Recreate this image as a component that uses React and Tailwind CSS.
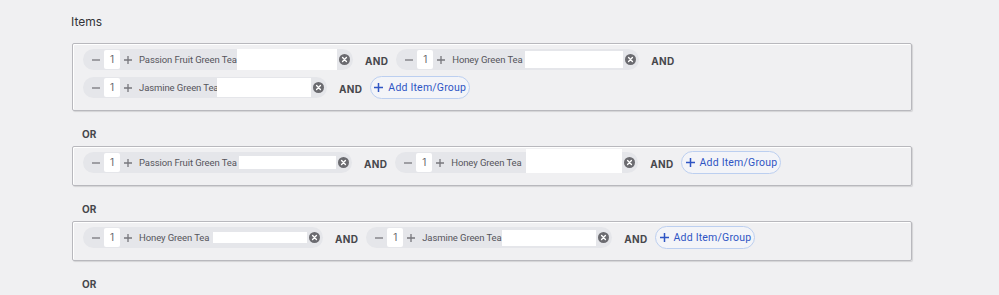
import React from 'react';

const groups = [
  {
    rows: [
      {
        items: [
          { name: 'Passion Fruit Green Tea', textW: 'w-[98px]', inputW: 'w-[100px]', inputH: 'h-[21px]' },
          { name: 'Honey Green Tea', textW: 'w-[73px]', inputW: 'w-[98px]', inputH: 'h-[17px]' },
        ],
        add: false,
      },
      {
        items: [{ name: 'Jasmine Green Tea', textW: 'w-[78px]', inputW: 'w-[94px]', inputH: 'h-[19px]' }],
        add: true,
      },
    ],
  },
  {
    rows: [
      {
        items: [
          { name: 'Passion Fruit Green Tea', textW: 'w-[100px]', inputW: 'w-[97px]', inputH: 'h-[13px]' },
          { name: 'Honey Green Tea', textW: 'w-[75px]', inputW: 'w-[96px]', inputH: 'h-[24px] -mt-[4px]' },
        ],
        add: true,
      },
    ],
  },
  {
    rows: [
      {
        items: [
          { name: 'Honey Green Tea', textW: 'w-[74px]', inputW: 'w-[94px]', inputH: 'h-[11px]' },
          { name: 'Jasmine Green Tea', textW: 'w-[80px]', inputW: 'w-[94px]', inputH: 'h-[16px]' },
        ],
        add: true,
      },
    ],
  },
];

const Minus = () => (
  <svg width="8" height="8" viewBox="0 0 8 8" className="shrink-0">
    <path d="M0 4h8" stroke="#77777c" strokeWidth="1.3" />
  </svg>
);

const Plus = () => (
  <svg width="8" height="8" viewBox="0 0 8 8" className="shrink-0">
    <path d="M0 4h8M4 0v8" stroke="#77777c" strokeWidth="1.3" />
  </svg>
);

const Clear = () => (
  <svg width="11" height="11" viewBox="0 0 12 12" className="shrink-0">
    <circle cx="6" cy="6" r="6" fill="#6b6b70" />
    <path d="M3.9 3.9l4.2 4.2M8.1 3.9l-4.2 4.2" stroke="#fff" strokeWidth="1.5" strokeLinecap="round" />
  </svg>
);

const ItemChip = ({ item }) => (
  <div className="flex items-center h-[21px] rounded-full bg-[#e5e6ea] pl-[9px] pr-[3px]">
    <Minus />
    <div className="ml-[4px] w-[16px] h-[19px] rounded-[2px] bg-white flex items-center justify-center text-[10px] text-[#66666b]">
      1
    </div>
    <span className="ml-[4px]">
      <Plus />
    </span>
    <span className={`ml-[7px] ${item.textW} overflow-hidden whitespace-nowrap font-['Roboto',sans-serif] text-[9.5px] tracking-[-0.1px] leading-[21px] text-[#55555b]`}>
      {item.name}
    </span>
    <div className={`${item.inputW} ${item.inputH} bg-white`} />
    <span className="ml-[2px] flex">
      <Clear />
    </span>
  </div>
);

const AndLabel = () => (
  <span className="ml-[12px] mr-[8px] mt-[3px] text-[10px] font-bold text-[#47474c] tracking-[0.3px]">AND</span>
);

const AddButton = () => (
  <button className="flex items-center justify-center gap-[5px] w-[100px] h-[23px] rounded-full border border-[#bccff0] bg-[#f3f4f8] font-['Roboto',sans-serif] text-[10.5px] tracking-[0.2px] text-[#2f55c4]">
    <svg width="9" height="9" viewBox="0 0 9 9">
      <path d="M0 4.5h9M4.5 0v9" stroke="#2f55c4" strokeWidth="1.5" />
    </svg>
    Add Item/Group
  </button>
);

const OrLabel = () => (
  <div className="ml-[82px] mt-[17px] mb-[6px] text-[10px] leading-[12px] font-bold text-[#47474c]">OR</div>
);

export default function App() {
  return (
    <div className="w-[999px] h-[295px] overflow-hidden bg-[#f0f0f2] font-['Inter','Liberation_Sans',sans-serif]">
      <div className="pl-[71px] pt-[15px] mb-[14px] text-[12px] leading-[14px] text-[#333338]">Items</div>
      {groups.map((group, gi) => (
        <div key={gi}>
          <div className="ml-[72px] w-[840px] border border-[#b8b8bd] rounded-[2px] shadow-[inset_1px_1px_0_#fff,1px_1px_1px_rgba(0,0,0,0.12)] pl-[10px] pt-[5px] pb-[12px] flex flex-col gap-[7px]">
            {group.rows.map((row, ri) => (
              <div key={ri} className="flex items-center h-[21px]">
                {row.items.map((item, ii) => (
                  <React.Fragment key={ii}>
                    <ItemChip item={item} />
                    <AndLabel />
                  </React.Fragment>
                ))}
                {row.add && <AddButton />}
              </div>
            ))}
          </div>
          <OrLabel />
        </div>
      ))}
    </div>
  );
}
